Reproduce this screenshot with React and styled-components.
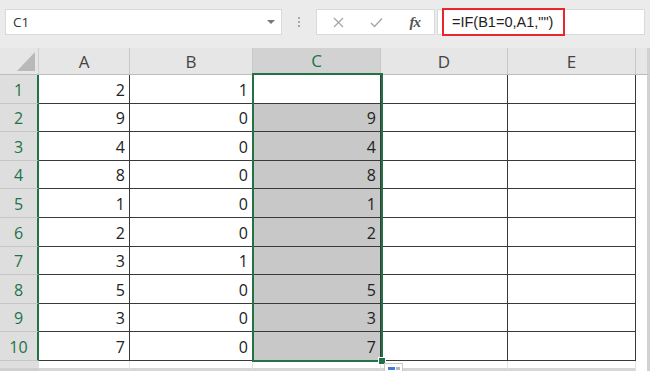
import React from "react";
import styled, { createGlobalStyle } from "styled-components";

const Global = createGlobalStyle`
  html, body { margin: 0; padding: 0; background: #ffffff; }
  body { font-family: "Open Sans", "Noto Sans", sans-serif; }
`;

const GREEN = "#217346";
const colWidths = [39, 91, 123, 128, 127, 128, 14];
const rowHeights = [29, 28, 29, 28, 29, 29, 28, 29, 28, 29];
const data = [
  [2, 1, ""],
  [9, 0, 9],
  [4, 0, 4],
  [8, 0, 8],
  [1, 0, 1],
  [2, 0, 2],
  [3, 1, ""],
  [5, 0, 5],
  [3, 0, 3],
  [7, 0, 7],
];

const Page = styled.div`
  width: 650px;
  height: 371px;
  overflow: hidden;
  display: flex;
  flex-direction: column;
  background: #ebebeb;
`;

const Toolbar = styled.div`
  height: 48px;
  flex: none;
  box-sizing: border-box;
  display: flex;
  align-items: flex-start;
  padding: 9px 0 0 5px;
  background: #ebebeb;
`;

const NameBox = styled.div`
  width: 277px;
  height: 26px;
  box-sizing: border-box;
  background: #fff;
  border: 1px solid #dadada;
  display: flex;
  align-items: center;
  justify-content: space-between;
  padding: 0 6px 0 7px;
  font-size: 13.5px;
  color: #333;
`;

const Caret = styled.span`
  width: 0;
  height: 0;
  border-left: 4px solid transparent;
  border-right: 4px solid transparent;
  border-top: 4px solid #777;
`;

const Grip = styled.div`
  width: 34px;
  height: 26px;
  display: flex;
  flex-direction: column;
  align-items: center;
  justify-content: center;
  gap: 2px;
`;

const GripDot = styled.span`
  width: 2px;
  height: 2px;
  background: #a8a8a8;
`;

const ButtonBox = styled.div`
  width: 119px;
  height: 26px;
  box-sizing: border-box;
  background: #fff;
  border: 1px solid #dadada;
  display: flex;
  align-items: center;
  padding-left: 2px;
`;

const IconSlot = styled.span`
  width: 39px;
  display: flex;
  align-items: center;
  justify-content: center;
`;

const Fx = styled.span`
  font-family: "Liberation Serif", "DejaVu Serif", serif;
  font-style: italic;
  font-weight: bold;
  font-size: 15px;
  color: #555;
  letter-spacing: -1px;
`;

const FormulaBar = styled.div`
  margin-left: 2px;
  width: 208px;
  height: 26px;
  background: #fff;
  border: 1px solid #dadada;
  box-sizing: border-box;
  display: flex;
  align-items: flex-start;
`;

const Highlight = styled.div`
  margin: -2px 0 0 4px;
  width: 123px;
  height: 28px;
  box-sizing: border-box;
  border: 2px solid #e8262b;
  display: flex;
  align-items: center;
  padding-left: 8px;
  font-family: "Liberation Sans", Arial, sans-serif;
  font-size: 14.5px;
  color: #222;
`;

const GridWrap = styled.div`
  position: relative;
  flex: 1;
  background: #fff;
`;

const Grid = styled.div`
  display: grid;
  grid-template-columns: ${colWidths.map((w) => w + "px").join(" ")};
  grid-template-rows: 27px ${rowHeights.map((h) => h + "px").join(" ")} 10px;
`;

const Corner = styled.div`
  background: #e6e6e6;
  border-right: 1px solid #cfcfcf;
  border-bottom: 1px solid #bdbdbd;
  box-sizing: border-box;
  display: flex;
  align-items: flex-end;
  justify-content: flex-end;
  padding: 0 3px 3px 0;
`;

const ColHead = styled.div`
  box-sizing: border-box;
  background: ${(p) => (p.$active ? "#d2d2d2" : "#e6e6e6")};
  color: ${(p) => (p.$active ? GREEN : "#444")};
  border-right: 1px solid #c8c8c8;
  border-bottom: ${(p) => (p.$active ? `2px solid ${GREEN}` : "1px solid #bdbdbd")};
  display: flex;
  align-items: center;
  justify-content: center;
  font-size: 17px;
`;

const RowHead = styled.div`
  box-sizing: border-box;
  background: #dedede;
  color: ${GREEN};
  border-right: 2px solid ${GREEN};
  border-bottom: 1px solid #c6c6c6;
  display: flex;
  align-items: center;
  justify-content: center;
  padding-top: 1px;
  font-size: 16px;
`;

const Cell = styled.div`
  box-sizing: border-box;
  background: ${(p) => (p.$shaded ? "#c8c8c8" : "#fff")};
  border-right: 1px solid #3a3a3a;
  border-bottom: 1px solid #3a3a3a;
  display: flex;
  align-items: flex-end;
  justify-content: flex-end;
  padding: 0 4px 5px 0;
  font-size: 16px;
  line-height: 1;
  color: #222;
`;

const EdgeCell = styled.div`
  box-sizing: border-box;
  background: ${(p) => (p.$head ? "#e6e6e6" : "#fff")};
  border-right: 3px solid #d2d2d2;
  border-bottom: ${(p) => (p.$head ? "1px solid #bdbdbd" : "none")};
`;

const TailCell = styled.div`
  box-sizing: border-box;
  background: #fff;
  border-right: 1px solid #e4e4e4;
  border-bottom: 3px solid #d6d6d6;
`;

const TailHead = styled.div`
  background: #dedede;
  border-bottom: 3px solid #cfcfcf;
`;

const Selection = styled.div`
  position: absolute;
  left: 252px;
  top: 25px;
  width: 131px;
  height: 289px;
  box-sizing: border-box;
  border: 2px solid ${GREEN};
  pointer-events: none;
`;

const FillHandle = styled.div`
  position: absolute;
  right: -5px;
  bottom: -5px;
  width: 6px;
  height: 6px;
  background: ${GREEN};
  border: 1px solid #fff;
`;

const PasteTag = styled.div`
  position: absolute;
  left: 384px;
  top: 315px;
  width: 19px;
  height: 12px;
  box-sizing: border-box;
  background: #fff;
  border: 1px solid #c8c8c8;
  padding: 3px 0 0 3px;
  display: flex;
  gap: 1px;
`;

const PasteBlue = styled.span`
  width: 7px;
  height: 3px;
  background: #3c7ddc;
`;

const PasteGray = styled.span`
  width: 4px;
  height: 3px;
  background: #b8b8b8;
`;

export default function App() {
  const letters = ["A", "B", "C", "D", "E"];
  return (
    <>
      <Global />
      <Page>
        <Toolbar>
          <NameBox>
            <span>C1</span>
            <Caret />
          </NameBox>
          <Grip>
            <GripDot />
            <GripDot />
            <GripDot />
          </Grip>
          <ButtonBox>
            <IconSlot>
              <svg width="11" height="11" viewBox="0 0 11 11">
                <path d="M1 1 L10 10 M10 1 L1 10" stroke="#a6a6a6" strokeWidth="1.3" fill="none" />
              </svg>
            </IconSlot>
            <IconSlot>
              <svg width="13" height="11" viewBox="0 0 13 11">
                <path d="M1 6 L4.5 9.5 L12 1.5" stroke="#a6a6a6" strokeWidth="1.4" fill="none" />
              </svg>
            </IconSlot>
            <IconSlot>
              <Fx>fx</Fx>
            </IconSlot>
          </ButtonBox>
          <FormulaBar>
            <Highlight>=IF(B1=0,A1,"")</Highlight>
          </FormulaBar>
        </Toolbar>
        <GridWrap>
          <Grid>
            <Corner>
              <svg width="18" height="19" viewBox="0 0 18 19">
                <polygon points="18,0 18,19 0,19" fill="#b9b9b9" />
              </svg>
            </Corner>
            {letters.map((l) => (
              <ColHead key={l} $active={l === "C"}>
                {l}
              </ColHead>
            ))}
            <EdgeCell $head />
            {data.map((row, r) => (
              <React.Fragment key={r}>
                <RowHead>{r + 1}</RowHead>
                <Cell>{row[0]}</Cell>
                <Cell>{row[1]}</Cell>
                <Cell $shaded={r !== 0}>{row[2]}</Cell>
                <Cell />
                <Cell />
                <EdgeCell />
              </React.Fragment>
            ))}
            <TailHead />
            <TailCell />
            <TailCell />
            <TailCell />
            <TailCell />
            <TailCell />
            <EdgeCell />
          </Grid>
          <Selection>
            <FillHandle />
          </Selection>
          <PasteTag>
            <PasteBlue />
            <PasteGray />
          </PasteTag>
        </GridWrap>
      </Page>
    </>
  );
}
